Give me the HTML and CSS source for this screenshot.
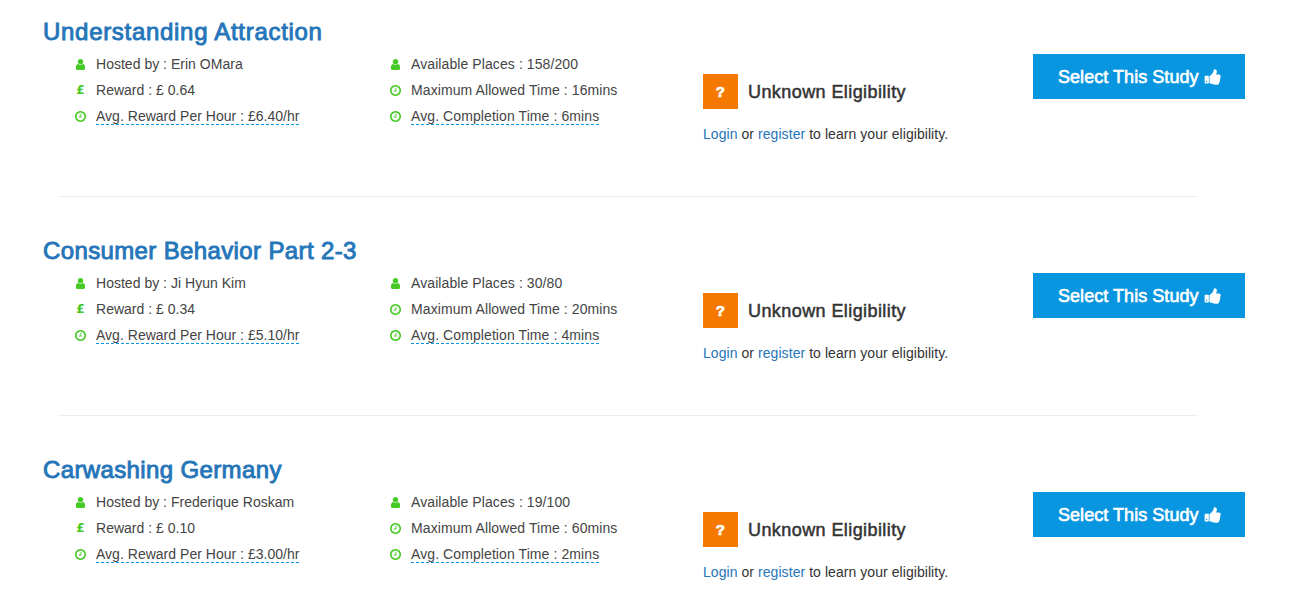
FILE: index.html
```html
<!DOCTYPE html>
<html lang="en">
<head>
    <meta charset="UTF-8">
    <meta name="viewport" content="width=device-width, initial-scale=1.0">
    <title>Studies</title>
    <link rel="stylesheet" href="styles.css">
</head>
<body>
    <!-- Shared icons -->
    <svg class="icon-defs">
        <symbol id="user" viewBox="192 128 1408 1536"><path d="M1536 1399q0 109-62.5 187t-150.5 78h-854q-88 0-150.5-78t-62.5-187q0-85 8.5-160.5t31.5-152 58.5-131 94-89 134.5-34.5q131 128 313 128t313-128q76 0 134.5 34.5t94 89 58.5 131 31.5 152 8.5 160.5zm-256-887q0 159-112.5 271.5t-271.5 112.5-271.5-112.5-112.5-271.5 112.5-271.5 271.5-112.5 271.5 112.5 112.5 271.5z"/></symbol>
        <symbol id="clock" viewBox="128 128 1536 1536"><path d="M1024 544v448q0 14-9 23t-23 9h-320q-14 0-23-9t-9-23v-64q0-14 9-23t23-9h224v-352q0-14 9-23t23-9h64q14 0 23 9t9 23zm416 352q0-148-73-273t-198-198-273-73-273 73-198 198-73 273 73 273 198 198 273 73 273-73 198-198 73-273zm224 0q0 209-103 385.5t-279.5 279.5-385.5 103-385.5-103-279.5-279.5-103-385.5 103-385.5 279.5-279.5 385.5-103 385.5 103 279.5 279.5 103 385.5z"/></symbol>
        <symbol id="thumb" viewBox="0 0 1792 1792"><path d="M320 1344q0-26-19-45t-45-19q-27 0-45.5 19t-18.5 45q0 27 18.5 45.5t45.5 18.5q26 0 45-18.5t19-45.5zm160-512v640q0 26-19 45t-45 19h-288q-26 0-45-19t-19-45v-640q0-26 19-45t45-19h288q26 0 45 19t19 45zm1184 0q0 86-55 149 15 44 15 76 3 76-43 137 17 56 0 117-15 57-54 94 9 112-49 181-64 76-197 78h-129q-66 0-144-15.5t-121.5-29-120.5-39.5q-123-43-158-44-26-1-45-19.5t-19-44.5v-641q0-25 18-43.5t43-20.5q24-2 76-59t101-121q68-87 101-120 18-18 31-48t17.5-48.5 13.5-60.5q7-39 12.5-61t19.5-52 34-50q19-19 45-19 46 0 82.5 10.5t60 26 40 40.5 24 45 12 50 5 45 .5 39q0 38-9.5 76t-19 60-27.5 56q-3 6-10 18t-11 22-8 24h277q78 0 135 57t57 135z"/></symbol>
    </svg>

    <div class="study">
        <h3 class="wide"><a href="#">Understanding Attraction</a></h3>
        <div class="study-row">
            <ul class="details">
                <li><svg class="icon"><use href="#user"/></svg><span>Hosted by : Erin OMara</span></li>
                <li><b class="icon pound">£</b><span>Reward : £ 0.64</span></li>
                <li><svg class="icon"><use href="#clock"/></svg><span class="tip">Avg. Reward Per Hour : £6.40/hr</span></li>
            </ul>
            <ul class="details times">
                <li><svg class="icon"><use href="#user"/></svg><span>Available Places : 158/200</span></li>
                <li><svg class="icon"><use href="#clock"/></svg><span>Maximum Allowed Time : 16mins</span></li>
                <li><svg class="icon"><use href="#clock"/></svg><span class="tip">Avg. Completion Time : 6mins</span></li>
            </ul>
            <div class="eligibility">
                <h4><span class="badge">?</span><span>Unknown Eligibility</span></h4>
                <p><a href="#">Login</a> or <a href="#">register</a> to learn your eligibility.</p>
            </div>
            <a href="#" class="btn"><span>Select This Study</span><svg><use href="#thumb"/></svg></a>
        </div>
    </div>
    <hr>

    <div class="study">
        <h3><a href="#">Consumer Behavior Part 2-3</a></h3>
        <div class="study-row">
            <ul class="details">
                <li><svg class="icon"><use href="#user"/></svg><span>Hosted by : Ji Hyun Kim</span></li>
                <li><b class="icon pound">£</b><span>Reward : £ 0.34</span></li>
                <li><svg class="icon"><use href="#clock"/></svg><span class="tip">Avg. Reward Per Hour : £5.10/hr</span></li>
            </ul>
            <ul class="details times">
                <li><svg class="icon"><use href="#user"/></svg><span>Available Places : 30/80</span></li>
                <li><svg class="icon"><use href="#clock"/></svg><span>Maximum Allowed Time : 20mins</span></li>
                <li><svg class="icon"><use href="#clock"/></svg><span class="tip">Avg. Completion Time : 4mins</span></li>
            </ul>
            <div class="eligibility">
                <h4><span class="badge">?</span><span>Unknown Eligibility</span></h4>
                <p><a href="#">Login</a> or <a href="#">register</a> to learn your eligibility.</p>
            </div>
            <a href="#" class="btn"><span>Select This Study</span><svg><use href="#thumb"/></svg></a>
        </div>
    </div>
    <hr>

    <div class="study">
        <h3><a href="#">Carwashing Germany</a></h3>
        <div class="study-row">
            <ul class="details">
                <li><svg class="icon"><use href="#user"/></svg><span>Hosted by : Frederique Roskam</span></li>
                <li><b class="icon pound">£</b><span>Reward : £ 0.10</span></li>
                <li><svg class="icon"><use href="#clock"/></svg><span class="tip">Avg. Reward Per Hour : £3.00/hr</span></li>
            </ul>
            <ul class="details times">
                <li><svg class="icon"><use href="#user"/></svg><span>Available Places : 19/100</span></li>
                <li><svg class="icon"><use href="#clock"/></svg><span>Maximum Allowed Time : 60mins</span></li>
                <li><svg class="icon"><use href="#clock"/></svg><span class="tip">Avg. Completion Time : 2mins</span></li>
            </ul>
            <div class="eligibility">
                <h4><span class="badge">?</span><span>Unknown Eligibility</span></h4>
                <p><a href="#">Login</a> or <a href="#">register</a> to learn your eligibility.</p>
            </div>
            <a href="#" class="btn"><span>Select This Study</span><svg><use href="#thumb"/></svg></a>
        </div>
    </div>
</body>
</html>
```
FILE: styles.css
```css
* {
    box-sizing: border-box;
}
body {
    margin: 0;
    padding-top: 18px;
    background: #fff;
    color: #333;
    font-family: "Helvetica Neue", "Liberation Sans", Arial, sans-serif;
    font-size: 14px;
    line-height: 20px;
    overflow: hidden;
}
a {
    color: #2575b9;
    text-decoration: none;
}
.icon-defs {
    display: none;
}
.study {
    height: 178px;
    padding-left: 43px;
}
.study h3 {
    margin: 0;
    font-size: 24px;
    font-weight: normal;
    line-height: 28px;
    letter-spacing: 0.37px;
    -webkit-text-stroke: 0.9px #2575b9;
}
.study h3.wide {
    letter-spacing: 0.7px;
}
.study-row {
    display: grid;
    grid-template-columns: 315px 313px 330px 212px;
    padding: 8px 0 0 32px;
    align-items: start;
}
.details {
    margin: -3px 0 0;
    padding: 0;
    list-style: none;
}
.details li {
    display: flex;
    align-items: center;
    height: 26px;
    color: #444;
    white-space: nowrap;
    letter-spacing: 0.02px;
}
.details.times li {
    letter-spacing: 0.09px;
}
.details li span {
    height: 18px;
    line-height: 18px;
}
.icon {
    width: 11px;
    height: 11px;
    margin-right: 10px;
    fill: #45c924;
    color: #45c924;
}
.pound {
    font-family: "DejaVu Sans", sans-serif;
    font-size: 12px;
    line-height: 11px;
    text-align: center;
}
.details li .tip {
    border-bottom: 1px dashed #0896e0;
}
.eligibility {
    padding-top: 20px;
}
.eligibility h4 {
    display: flex;
    align-items: center;
    margin: 0 0 15px;
    font-size: 18px;
    font-weight: normal;
    letter-spacing: 0.42px;
    -webkit-text-stroke: 0.5px #333;
}
.badge {
    width: 35px;
    height: 35px;
    margin-right: 10px;
    background: #f57900;
    color: #fff;
    font-size: 15px;
    font-weight: bold;
    line-height: 36px;
    text-align: center;
    -webkit-text-stroke: 0.7px #fff;
}
.eligibility p {
    margin: 0;
    letter-spacing: 0.06px;
}
.btn {
    display: flex;
    align-items: center;
    height: 45px;
    padding-left: 25px;
    background: #0896e0;
    color: #fff;
    font-size: 18px;
    letter-spacing: 0.05px;
    white-space: nowrap;
    -webkit-text-stroke: 0.6px #fff;
}
.btn svg {
    width: 18px;
    height: 18px;
    margin-left: 5px;
    fill: #fff;
    stroke: none;
}
hr {
    width: 1140px;
    height: 1px;
    margin: 0 0 40px 58px;
    border: 0;
    background: #eee;
}
```
